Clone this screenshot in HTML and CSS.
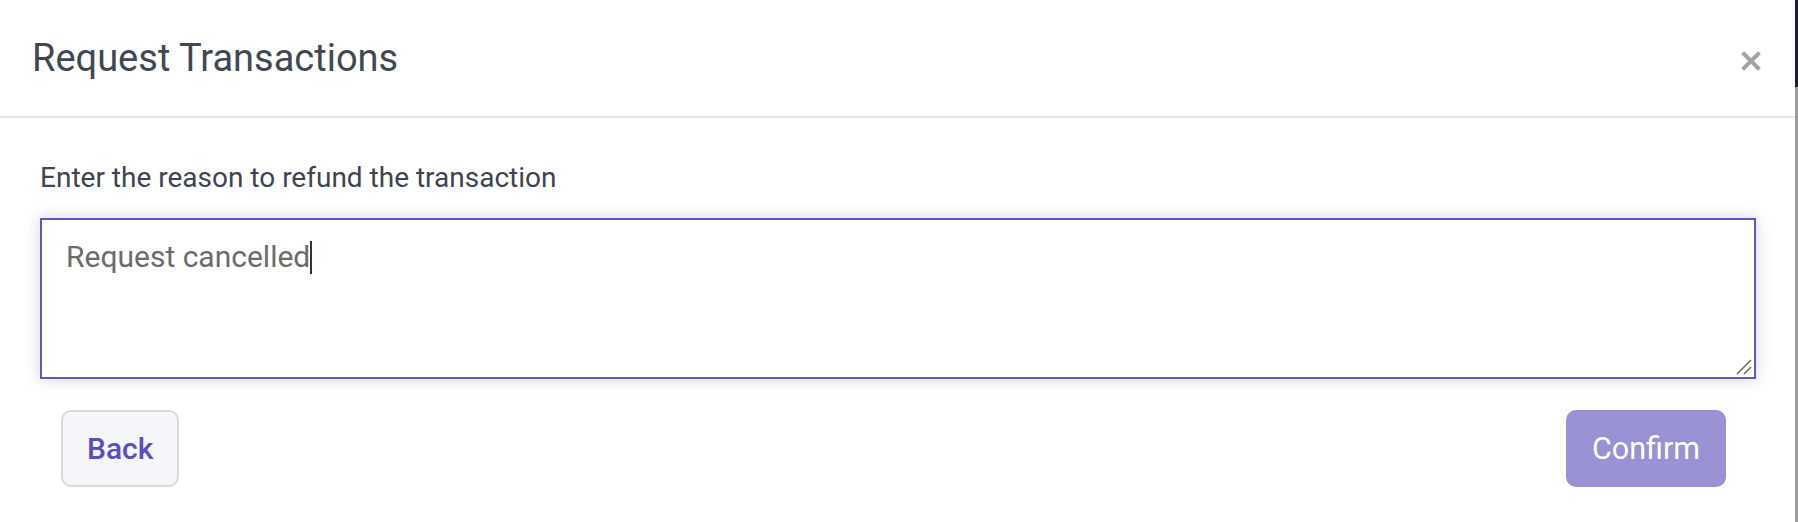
FILE: index.html
```html
<!DOCTYPE html>
<html lang="en">
<head>
    <meta charset="UTF-8">
    <meta name="viewport" content="width=device-width, initial-scale=1.0">
    <title>Request Transactions</title>
    <link rel="stylesheet" href="styles.css">
</head>
<body>
    <div class="page">
        <div class="modal">
            <div class="modal-header">
                <h2 class="modal-title">Request Transactions</h2>
                <button class="close" aria-label="Close">
                    <svg width="20" height="20" viewBox="0 0 20 20">
                        <path d="M3 3 L17 17 M17 3 L3 17" stroke="#a3a3a3" stroke-width="4" stroke-linecap="square"/>
                    </svg>
                </button>
            </div>
            <div class="modal-body">
                <label class="label">Enter the reason to refund the transaction</label>
                <div class="reason">
                    <span class="reason-text">Request cancelled</span><span class="caret"></span>
                    <svg class="grip" width="16" height="16" viewBox="0 0 16 16">
                        <path d="M1 15 L15 1 M8 15 L15 8" stroke="#6a6a6a" stroke-width="1.5"/>
                    </svg>
                </div>
            </div>
            <div class="modal-footer">
                <button class="btn btn-back">Back</button>
                <button class="btn btn-confirm">Confirm</button>
            </div>
        </div>
        <div class="edge"></div>
    </div>
</body>
</html>
```

FILE: styles.css
```css
body {
    font-family: Roboto, 'Liberation Sans', sans-serif;
    margin: 0;
    padding: 0;
    background: #fff;
    color: #3e4451;
}
.page {
    display: flex;
    height: 522px;
}
.modal {
    flex: 1;
    background: #fff;
}
.edge {
    width: 3px;
    background: linear-gradient(#1d1c36 0, #1d1c36 87px, #9c9c9c 87px);
}
.modal-header {
    height: 116px;
    border-bottom: 2px solid #e4e4e4;
    display: flex;
    align-items: center;
    justify-content: space-between;
    padding: 0 34px 0 32px;
}
.modal-title {
    margin: 0;
    font-size: 38px;
    font-weight: 400;
    color: #414855;
}
.close {
    background: none;
    border: none;
    padding: 0;
    margin-top: 6px;
    display: flex;
}
.modal-body {
    padding: 43px 39px 0 40px;
}
.label {
    display: block;
    font-size: 28px;
    color: #3e4451;
    margin-bottom: 24px;
}
.reason {
    position: relative;
    box-sizing: border-box;
    height: 161px;
    border: 2px solid #5d56c3;
    box-shadow: 0 0 14px rgba(93, 86, 195, 0.28);
    padding: 19px 22px 0 24px;
    font-size: 30px;
    color: #6b6b6b;
}
.caret {
    display: inline-block;
    width: 2px;
    height: 33px;
    background: #333;
    vertical-align: -7px;
}
.grip {
    position: absolute;
    right: 2px;
    bottom: 2px;
}
.modal-footer {
    display: flex;
    justify-content: space-between;
    padding: 31px 69px 0 61px;
}
.btn {
    font-family: Roboto, 'Liberation Sans', sans-serif;
    font-size: 30px;
    height: 77px;
    border-radius: 10px;
    cursor: pointer;
}
.btn-back {
    background: #f5f6fa;
    border: 2px solid #dadada;
    color: #5a4fbf;
    font-weight: 500;
    padding: 0 24px;
}
.btn-confirm {
    background: #9891d3;
    border: none;
    color: #fff;
    font-weight: 400;
    font-size: 30.5px;
    padding: 0 26px;
}
```
